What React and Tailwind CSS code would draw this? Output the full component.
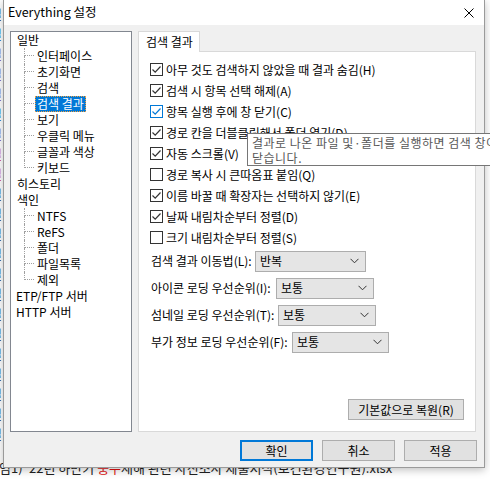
import React from 'react';

const groupA = ['인터페이스', '초기화면', '검색', '검색 결과', '보기', '우클릭 메뉴', '글꼴과 색상', '키보드'];
const groupB = ['NTFS', 'ReFS', '폴더', '파일목록', '제외'];

const options = [
  { label: '아무 것도 검색하지 않았을 때 결과 숨김(H)', checked: true },
  { label: '검색 시 항목 선택 해제(A)', checked: true },
  { label: '항목 실행 후에 창 닫기(C)', checked: true, hot: true },
  { label: '경로 칸을 더블클릭해서 폴더 열기(D)', checked: true },
  { label: '자동 스크롤(V)', checked: true },
  { label: '경로 복사 시 큰따옴표 붙임(Q)', checked: false },
  { label: '이름 바꿀 때 확장자는 선택하지 않기(E)', checked: true },
  { label: '날짜 내림차순부터 정렬(D)', checked: true },
  { label: '크기 내림차순부터 정렬(S)', checked: false },
];

const selects = [
  { label: '검색 결과 이동법(L):', value: '반복', lw: 'w-[105px]', sw: 'w-[111px]' },
  { label: '아이콘 로딩 우선순위(I):', value: '보통', lw: 'w-[126px]', sw: 'w-[98px]' },
  { label: '섬네일 로딩 우선순위(T):', value: '보통', lw: 'w-[128px]', sw: 'w-[98px]' },
  { label: '부가 정보 로딩 우선순위(F):', value: '보통', lw: 'w-[142px]', sw: 'w-[97px]' },
];

// colours of the file-list rows peeking out left of the dialog
const sideColors = ['text-[#333]', 'text-[#2a5db0]', 'text-[#7b3f8c]', 'text-[#7b3f8c]', 'text-[#7b3f8c]', 'text-[#2a5db0]', 'text-[#7b3f8c]', 'text-[#d02020]', 'text-[#d02020]', 'text-[#333]', 'text-[#333]', 'text-[#333]', 'text-[#333]', 'text-[#333]', 'text-[#333]', 'text-[#333]', 'text-[#333]', 'text-[#333]', 'text-[#333]', 'text-[#333]', 'text-[#333]', 'text-[#333]'];

function Check({ checked, hot }) {
  return (
    <div className={`w-[13px] h-[13px] border bg-white flex items-center justify-center ${hot ? 'border-[#0078d7]' : 'border-[#333]'}`}>
      {checked && (
        <svg width="11" height="11" viewBox="0 0 11 11">
          <path d="M1.5 5.5 L4.2 8.2 L9.5 2.5" fill="none" stroke={hot ? '#0078d7' : '#333'} strokeWidth="1.2" />
        </svg>
      )}
    </div>
  );
}

function Chevron() {
  return (
    <svg width="9" height="6" viewBox="0 0 9 6">
      <path d="M0.5 0.8 L4.5 4.8 L8.5 0.8" fill="none" stroke="#333" strokeWidth="1" />
    </svg>
  );
}

function TreeChild({ text, last, selected }) {
  return (
    <div className="flex h-[16px]">
      <div className="ml-[13px] w-[10px] flex flex-col">
        <div className="h-[8px] border-l border-b border-dotted border-[#a0a0a0]" />
        <div className={`flex-1 ${last ? '' : 'border-l border-dotted border-[#a0a0a0]'}`} />
      </div>
      <div className="pl-[1px]">
        <span className={`block h-[16px] leading-[16px] px-[2px] ${selected ? 'bg-[#0078d7] text-white outline outline-1 outline-dotted outline-[#f0a040] -outline-offset-1' : ''}`}>
          {text}
        </span>
      </div>
    </div>
  );
}

function TreeRoot({ text }) {
  return <div className="h-[16px] leading-[16px] pl-[6px]">{text}</div>;
}

export default function App() {
  return (
    <div className="relative w-[490px] h-[479px] overflow-hidden bg-white font-['Noto_Sans_CJK_KR',sans-serif] text-[12px] text-black">
      {/* document behind the dialog */}
      <div className="flex flex-col">
        <div className="h-[460px] pt-[4px] flex flex-col overflow-hidden">
          {sideColors.map((c, i) => (
            <div key={i} className={`h-[20px] leading-[20px] text-[13px] -ml-[10px] whitespace-nowrap ${c}`}>
              일
            </div>
          ))}
        </div>
        <div className="h-[16px] leading-[16px] text-[13px] whitespace-nowrap -ml-[13px] text-[#222]">
          붙임1) '22년 하반기 <span className="text-[#e01010]">풍수</span>재해 관련 자진조사 제출서식(보건환경연구원).xlsx
        </div>
      </div>

      {/* settings dialog */}
      <div className="absolute left-[3px] top-0 w-[482px] h-[468px] flex flex-col border-l border-r border-b border-[#9a9a9a] bg-[#f0f0f0] shadow-[0_2px_8px_rgba(0,0,0,0.25)]">
        <div className="h-[26px] bg-white flex items-center justify-between pl-[4px] pr-[10px]">
          <span className="text-[12.5px]">Everything 설정</span>
          <svg width="10" height="10" viewBox="0 0 10 10">
            <path d="M0.5 0.5 L9.5 9.5 M9.5 0.5 L0.5 9.5" stroke="#000" strokeWidth="1" />
          </svg>
        </div>

        <div className="flex-1 flex flex-col pt-[6px] pl-[6px] pr-[6px] pb-[6px]">
          <div className="flex gap-[6px] h-[401px]">
            {/* tree */}
            <div className="w-[122px] h-full bg-white border border-[#828790]">
              <TreeRoot text="일반" />
              {groupA.map((t, i) => (
                <TreeChild key={t} text={t} last={i === groupA.length - 1} selected={t === '검색 결과'} />
              ))}
              <TreeRoot text="히스토리" />
              <TreeRoot text="색인" />
              {groupB.map((t, i) => (
                <TreeChild key={t} text={t} last={i === groupB.length - 1} />
              ))}
              <div className="h-[16px] leading-[16px] pl-[5px]">ETP/FTP 서버</div>
              <div className="h-[16px] leading-[16px] pl-[5px]">HTTP 서버</div>
            </div>

            {/* tab control */}
            <div className="w-[338px] flex flex-col">
              <div className="flex h-[21px]">
                <div className="w-[62px] h-[21px] bg-white border-t border-l border-r border-[#d9d9d9] leading-[20px] pl-[7px] relative z-10">
                  검색 결과
                </div>
              </div>
              <div className="flex-1 -mt-[1px] bg-white border border-[#d9d9d9] flex flex-col pl-[11px] pt-[7px]">
                {options.map((o) => (
                  <div key={o.label} className="flex items-center h-[21px] gap-[3px] whitespace-nowrap">
                    <Check checked={o.checked} hot={o.hot} />
                    <span className="leading-[21px]">{o.label}</span>
                  </div>
                ))}
                <div className="flex flex-col gap-[5px] mt-[2px]">
                  {selects.map((s) => (
                    <div key={s.label} className="flex items-center h-[22px]">
                      <span className={`${s.lw} pl-[1px] whitespace-nowrap`}>{s.label}</span>
                      <div className={`${s.sw} h-[21px] bg-[#e5e5e5] border border-[#adadad] flex items-center justify-between pl-[4px] pr-[6px]`}>
                        <span>{s.value}</span>
                        <Chevron />
                      </div>
                    </div>
                  ))}
                </div>
                <div className="mt-auto flex justify-end pr-[11px] pb-[11px]">
                  <div className="w-[116px] h-[21px] bg-[#e1e1e1] border border-[#adadad] flex items-center justify-center">
                    기본값으로 복원(R)
                  </div>
                </div>
              </div>
            </div>
          </div>

          <div className="flex justify-end gap-[9px] mt-[8px] pr-[1px]">
            <div className="w-[73px] h-[21px] bg-[#e1e1e1] border-2 border-[#0078d7] flex items-center justify-center">확인</div>
            <div className="w-[73px] h-[21px] bg-[#e1e1e1] border border-[#adadad] flex items-center justify-center">취소</div>
            <div className="w-[73px] h-[21px] bg-[#e1e1e1] border border-[#adadad] flex items-center justify-center">적용</div>
          </div>
        </div>
      </div>

      {/* tooltip over the option list */}
      <div className="absolute left-[247px] top-[133px] w-[260px] h-[33px] bg-white border border-[#767676] text-[#575757] pl-[4px] pt-[1px] leading-[15px] tracking-[0.5px] whitespace-nowrap">
        결과로 나온 파일 및·폴더를 실행하면 검색 창이
        <br />
        닫습니다.
      </div>
    </div>
  );
}
